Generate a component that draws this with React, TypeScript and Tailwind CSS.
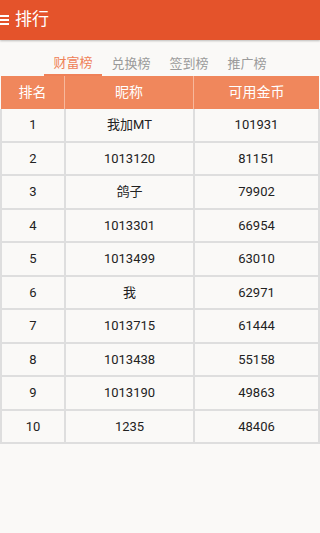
const rows: [string, string, string][] = [
  ['1', '我加MT', '101931'],
  ['2', '1013120', '81151'],
  ['3', '鸽子', '79902'],
  ['4', '1013301', '66954'],
  ['5', '1013499', '63010'],
  ['6', '我', '62971'],
  ['7', '1013715', '61444'],
  ['8', '1013438', '55158'],
  ['9', '1013190', '49863'],
  ['10', '1235', '48406'],
];

const tabs = ['财富榜', '兑换榜', '签到榜', '推广榜'];

export default function App() {
  return (
    <div
      className="w-[320px] h-[533px] bg-[#faf9f7] overflow-hidden"
      style={{ fontFamily: 'Roboto, "Noto Sans CJK SC", sans-serif' }}
    >
      <header className="h-10 bg-[#e4532b] flex items-center text-white shadow-[0_1px_2px_rgba(0,0,0,0.25)]">
        <svg width="10" height="12" viewBox="0 0 10 12">
          <rect x="0" y="1" width="9" height="2" fill="white" />
          <rect x="0" y="5" width="9" height="2" fill="white" />
          <rect x="0" y="9" width="9" height="2" fill="white" />
        </svg>
        <span className="ml-[5px] text-[17px]">排行</span>
      </header>

      <nav className="mt-[12px] flex justify-center">
        {tabs.map((t, i) => (
          <div
            key={t}
            className={`w-[58px] h-[24px] flex items-center justify-center text-[13px] ${
              i === 0 ? 'text-[#ef8158] border-b-[2px] border-[#ef8158]' : 'text-[#9b9b9b]'
            }`}
          >
            {t}
          </div>
        ))}
      </nav>

      <div className="text-[13px]">
        <div className="flex h-[33px] bg-[#f0875c] text-white mx-[1px] text-[14px]">
          <div className="w-[63px] flex items-center justify-center">排名</div>
          <div className="w-[1px] bg-[#f7b89c]" />
          <div className="w-[128px] flex items-center justify-center">昵称</div>
          <div className="w-[1px] bg-[#f7b89c]" />
          <div className="flex-1 flex items-center justify-center">可用金币</div>
        </div>
        <div className="border-l-2 border-r-2 border-[#dedede]">
          {rows.map(([rank, name, coins]) => (
            <div key={rank} className="flex h-[33.5px] border-b-2 border-[#dedede] text-[#222]">
              <div className="w-[62px] flex items-center justify-center">{rank}</div>
              <div className="w-[2px] bg-[#dedede]" />
              <div className="w-[127px] flex items-center justify-center">{name}</div>
              <div className="w-[2px] bg-[#dedede]" />
              <div className="flex-1 flex items-center justify-center">{coins}</div>
            </div>
          ))}
        </div>
      </div>
    </div>
  );
}
